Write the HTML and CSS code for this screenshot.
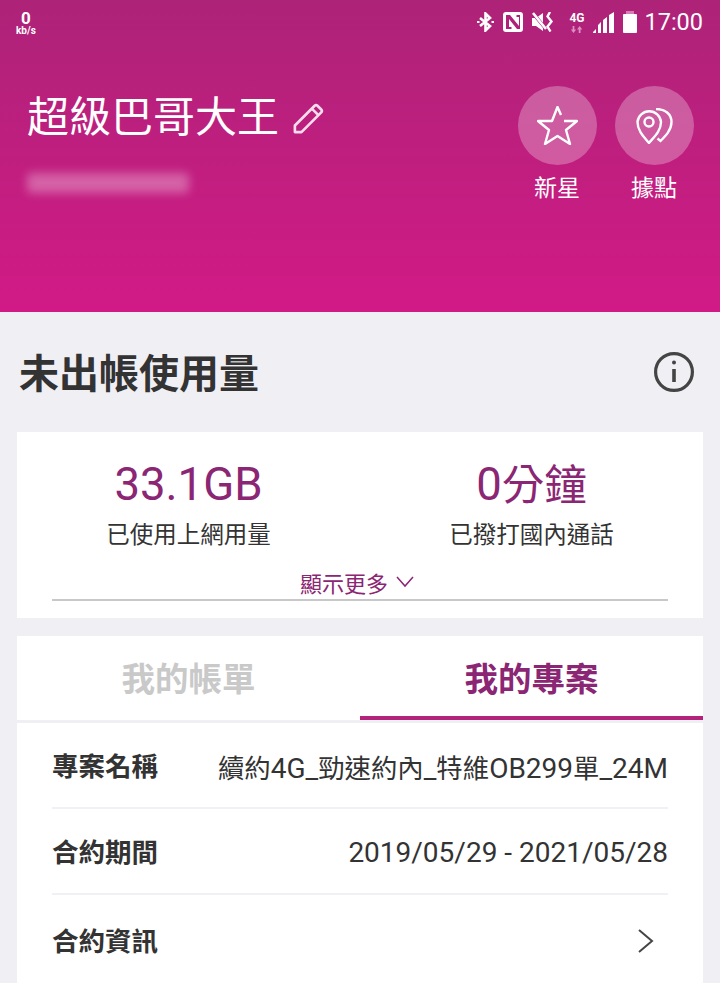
FILE: index.html
```html
<!DOCTYPE html>
<html lang="zh-Hant">
<head>
    <meta charset="UTF-8">
    <meta name="viewport" content="width=device-width, initial-scale=1.0">
    <title>我的專案</title>
    <link rel="stylesheet" href="styles.css">
</head>
<body>
    <header class="hero">
        <div class="status-bar">
            <div class="net-speed">
                <span class="net-value">0</span>
                <span class="net-unit">kb/s</span>
            </div>
            <div class="status-icons">
                <svg class="icon-bt" width="17" height="20" viewBox="0 0 17 20" fill="none" stroke="#fff" stroke-width="2.600">
                    <path d="M3 6l10 8-4.500 4.500V1.500L13 6 3 14"/>
                    <path d="M0 9h2.500v2H0zM14.500 9H17v2h-2.500z" fill="#fff" stroke="none"/>
                </svg>
                <svg class="icon-nfc" width="20" height="20" viewBox="0 0 20 20">
                    <rect width="20" height="20" rx="3" fill="#fff"/>
                    <path d="M4 3h3l9 11V5h-2.500V3H17v14h-3L6 7v8h2.500v2H3V3z" fill="#b0207a"/>
                </svg>
                <svg class="icon-mute" width="22" height="20" viewBox="0 0 22 20">
                    <path d="M0 6h4l7-5v18l-7-5H0z" fill="#fff"/>
                    <path d="M0 0l14 17" stroke="#b0207a" stroke-width="3.500"/>
                    <path d="M1 1l13 16" stroke="#fff" stroke-width="2.600"/>
                    <path d="M18 0l-2.500 4.500 4 5-4 5 3 5" fill="none" stroke="#fff" stroke-width="2.400"/>
                </svg>
                <div class="net-type">
                    <span class="net-4g">4G</span>
                    <svg width="14" height="7" viewBox="0 0 14 8" fill="#dd8fc2">
                        <path d="M2 0h2v4h2L3 8 0 4h2zM10 0l3 4h-2v4H9V4H7z"/>
                    </svg>
                </div>
                <svg class="icon-signal" width="21" height="21" viewBox="0 0 21 21" fill="#fff">
                    <path d="M0 21v-1l3-3v4zM5 21v-8l3-3v11zM10 21V8l4-3v16zM16 21V3l5-3v21z"/>
                </svg>
                <svg class="icon-battery" width="14" height="22" viewBox="0 0 14 22">
                    <rect x="3" y="0" width="8" height="3" fill="#d77db5"/>
                    <rect x="0" y="3" width="14" height="19" rx="1" fill="#fff"/>
                </svg>
                <span class="clock">17:00</span>
            </div>
        </div>
        <div class="hero-body">
            <div class="profile">
                <div class="profile-name">
                    <h1>超級巴哥大王</h1>
                    <svg class="icon-edit" width="32" height="32" viewBox="0 0 34 34" fill="none" stroke="#f6dcec" stroke-width="2.800" stroke-linejoin="round">
                        <path d="M2 25L23 4c1-1 2-1 3 0l4 4c1 1 1 2 0 3L9 32H2z"/>
                        <path d="M20 7l7 7"/>
                    </svg>
                </div>
                <div class="profile-phone"></div>
            </div>
            <div class="shortcuts">
                <div class="shortcut">
                    <div class="shortcut-circle">
                        <svg width="41" height="39" viewBox="0 0 41 39" fill="none" stroke="#fff" stroke-width="2.400" stroke-linejoin="round">
                            <path d="M24 9L20.500 1 15 15H1l11 9-4 14 12.500-8L33 38l-4-14 11-9H27"/>
                        </svg>
                    </div>
                    <span>新星</span>
                </div>
                <div class="shortcut">
                    <div class="shortcut-circle">
                        <svg width="37" height="36" viewBox="0 0 37 36" fill="none" stroke="#fff" stroke-width="2.400">
                            <path d="M13 35C8 29 1.500 23 1.500 14a11.800 11.800 0 0 1 23.500 0c0 9-7 15-12 21z"/>
                            <circle cx="13" cy="14" r="4.500"/>
                            <path d="M20 1c9 0 15.500 5 15.500 13 0 8-6 14-11 19l-3-2.500"/>
                        </svg>
                    </div>
                    <span>據點</span>
                </div>
            </div>
        </div>
    </header>

    <main class="content">
        <div class="section-head">
            <h2>未出帳使用量</h2>
            <svg width="40" height="40" viewBox="0 0 40 40" fill="none" stroke="#444" stroke-width="3.200">
                <circle cx="20" cy="20" r="18.400"/>
                <path d="M20 17v13" stroke-width="3.600"/>
                <circle cx="20" cy="10.500" r="2" fill="#444" stroke="none"/>
            </svg>
        </div>

        <section class="card usage-card">
            <div class="usage-grid">
                <div class="usage-item">
                    <div class="usage-value">33.1GB</div>
                    <div class="usage-label">已使用上網用量</div>
                </div>
                <div class="usage-item">
                    <div class="usage-value">0<span class="cjk">分鐘</span></div>
                    <div class="usage-label">已撥打國內通話</div>
                </div>
            </div>
            <div class="show-more">
                <span>顯示更多</span>
                <svg width="18" height="12" viewBox="0 0 18 12" fill="none" stroke="#8a2673" stroke-width="1.500">
                    <path d="M1 1l8 9 8-9"/>
                </svg>
            </div>
        </section>

        <section class="card plan-card">
            <div class="tabs">
                <div class="tab">我的帳單</div>
                <div class="tab active">我的專案</div>
            </div>
            <div class="rows">
                <div class="row">
                    <span class="row-label">專案名稱</span>
                    <span class="row-value"><span class="cjk">續約</span>4G_<span class="cjk">勁速約內</span>_<span class="cjk">特維</span>OB299<span class="cjk">單</span>_24M</span>
                </div>
                <div class="row">
                    <span class="row-label">合約期間</span>
                    <span class="row-value">2019/05/29 - 2021/05/28</span>
                </div>
                <div class="row">
                    <span class="row-label">合約資訊</span>
                    <svg class="row-arrow" width="16" height="24" viewBox="0 0 16 24" fill="none" stroke="#444" stroke-width="2">
                        <path d="M1 1l13 11L1 23"/>
                    </svg>
                </div>
            </div>
        </section>
    </main>
</body>
</html>
```

FILE: styles.css
```css
html, body {
    margin: 0;
    padding: 0;
    height: 983px;
    overflow: hidden;
}

body {
    font-family: Roboto, "Noto Sans CJK TC", sans-serif;
    background-color: #efeff4;
    color: #333;
}

.hero {
    height: 312px;
    background: linear-gradient(180deg, #ad2378 0%, #d21a86 100%);
    color: #fff;
    box-sizing: border-box;
}

.status-bar {
    height: 44px;
    display: flex;
    justify-content: space-between;
    padding: 0 17px 0 16px;
}

.net-speed {
    display: flex;
    flex-direction: column;
    align-items: center;
    padding-top: 10px;
    font-weight: 700;
}

.net-value {
    font-size: 17px;
    line-height: 16px;
}

.net-unit {
    font-size: 10px;
    line-height: 10px;
}

.status-icons {
    display: flex;
    align-items: center;
    height: 44px;
}

.icon-bt { margin-right: 9px; }
.icon-nfc { margin-right: 9px; }
.icon-mute { margin-right: 14px; }
.icon-signal { margin-right: 9px; margin-left: 8px; }
.icon-battery { margin-right: 7px; }

.net-type {
    display: flex;
    flex-direction: column;
    align-items: center;
    width: 17px;
    line-height: 1;
}

.net-4g {
    font-size: 12px;
    font-weight: 700;
    margin-bottom: 2px;
}

.clock {
    font-size: 23.5px;
    line-height: 44px;
}

.hero-body {
    display: flex;
    justify-content: space-between;
    padding: 42px 26px 0 27px;
}

.profile-name {
    display: flex;
    align-items: center;
    gap: 14px;
    height: 60px;
    margin-top: 2px;
}

.profile-name h1 {
    margin: 0;
    font-size: 42px;
    font-weight: 400;
    line-height: 60px;
}

.profile-phone {
    width: 162px;
    height: 20px;
    margin-top: 25px;
    background-color: rgba(255, 255, 255, 0.3);
    border-radius: 4px;
    filter: blur(5px);
}

.shortcuts {
    display: flex;
    gap: 17px;
}

.shortcut {
    display: flex;
    flex-direction: column;
    align-items: center;
    font-size: 23px;
    width: 80px;
}

.shortcut-circle {
    width: 79px;
    height: 79px;
    border-radius: 50%;
    background-color: rgba(255, 255, 255, 0.27);
    display: flex;
    align-items: center;
    justify-content: center;
    margin-bottom: 4px;
}

.section-head {
    display: flex;
    align-items: center;
    justify-content: space-between;
    height: 120px;
    padding: 0 26px 0 19px;
}

.section-head h2 {
    margin: -3px 0 0;
    font-size: 40px;
    font-weight: 700;
    color: #333;
}

.content {
    height: 671px;
    overflow: hidden;
}

.card {
    margin: 0 17px;
    background-color: #fff;
}

.usage-card {
    height: 186px;
    margin-bottom: 18px;
    box-sizing: border-box;
    padding: 25px 35px 0;
}

.usage-grid {
    display: grid;
    grid-template-columns: 1fr 1fr;
    margin: 0 -35px;
}

.usage-item {
    text-align: center;
}

.usage-value {
    font-size: 45.5px;
    line-height: 56px;
    height: 56px;
    color: #8a2673;
}

.usage-value .cjk {
    font-size: 42.5px;
}

.usage-label {
    font-size: 23.5px;
    line-height: 36px;
    margin-top: 4px;
    color: #333;
}

.show-more {
    display: flex;
    align-items: center;
    justify-content: center;
    gap: 8px;
    height: 30px;
    padding: 3px 6px 2px 0;
    margin-top: 11px;
    border-bottom: 2px solid #c8c8c8;
    font-size: 22px;
    color: #8a2673;
}

.tabs {
    display: grid;
    grid-template-columns: 1fr 1fr;
    height: 84px;
    border-bottom: 3px solid #efeff4;
}

.tab {
    font-size: 33.5px;
    font-weight: 700;
    line-height: 87px;
    text-align: center;
    color: #c9c9c9;
}

.tab.active {
    color: #8a2673;
    height: 84px;
    box-sizing: border-box;
    border-bottom: 4px solid #b3227b;
}

.rows {
    padding: 0 35px;
}

.row {
    display: flex;
    align-items: center;
    justify-content: space-between;
    height: 86px;
    box-sizing: border-box;
    padding-top: 2px;
    border-bottom: 2px solid #f1f1f5;
}

.row:last-child {
    height: 90px;
    border-bottom: none;
}

.row-label {
    font-size: 26.5px;
    font-weight: 700;
    margin-top: -3px;
    color: #333;
}

.row-value {
    font-size: 28px;
    color: #333;
}

.row-value .cjk {
    font-size: 26.4px;
}

.row-arrow {
    margin-right: 14px;
}
```
